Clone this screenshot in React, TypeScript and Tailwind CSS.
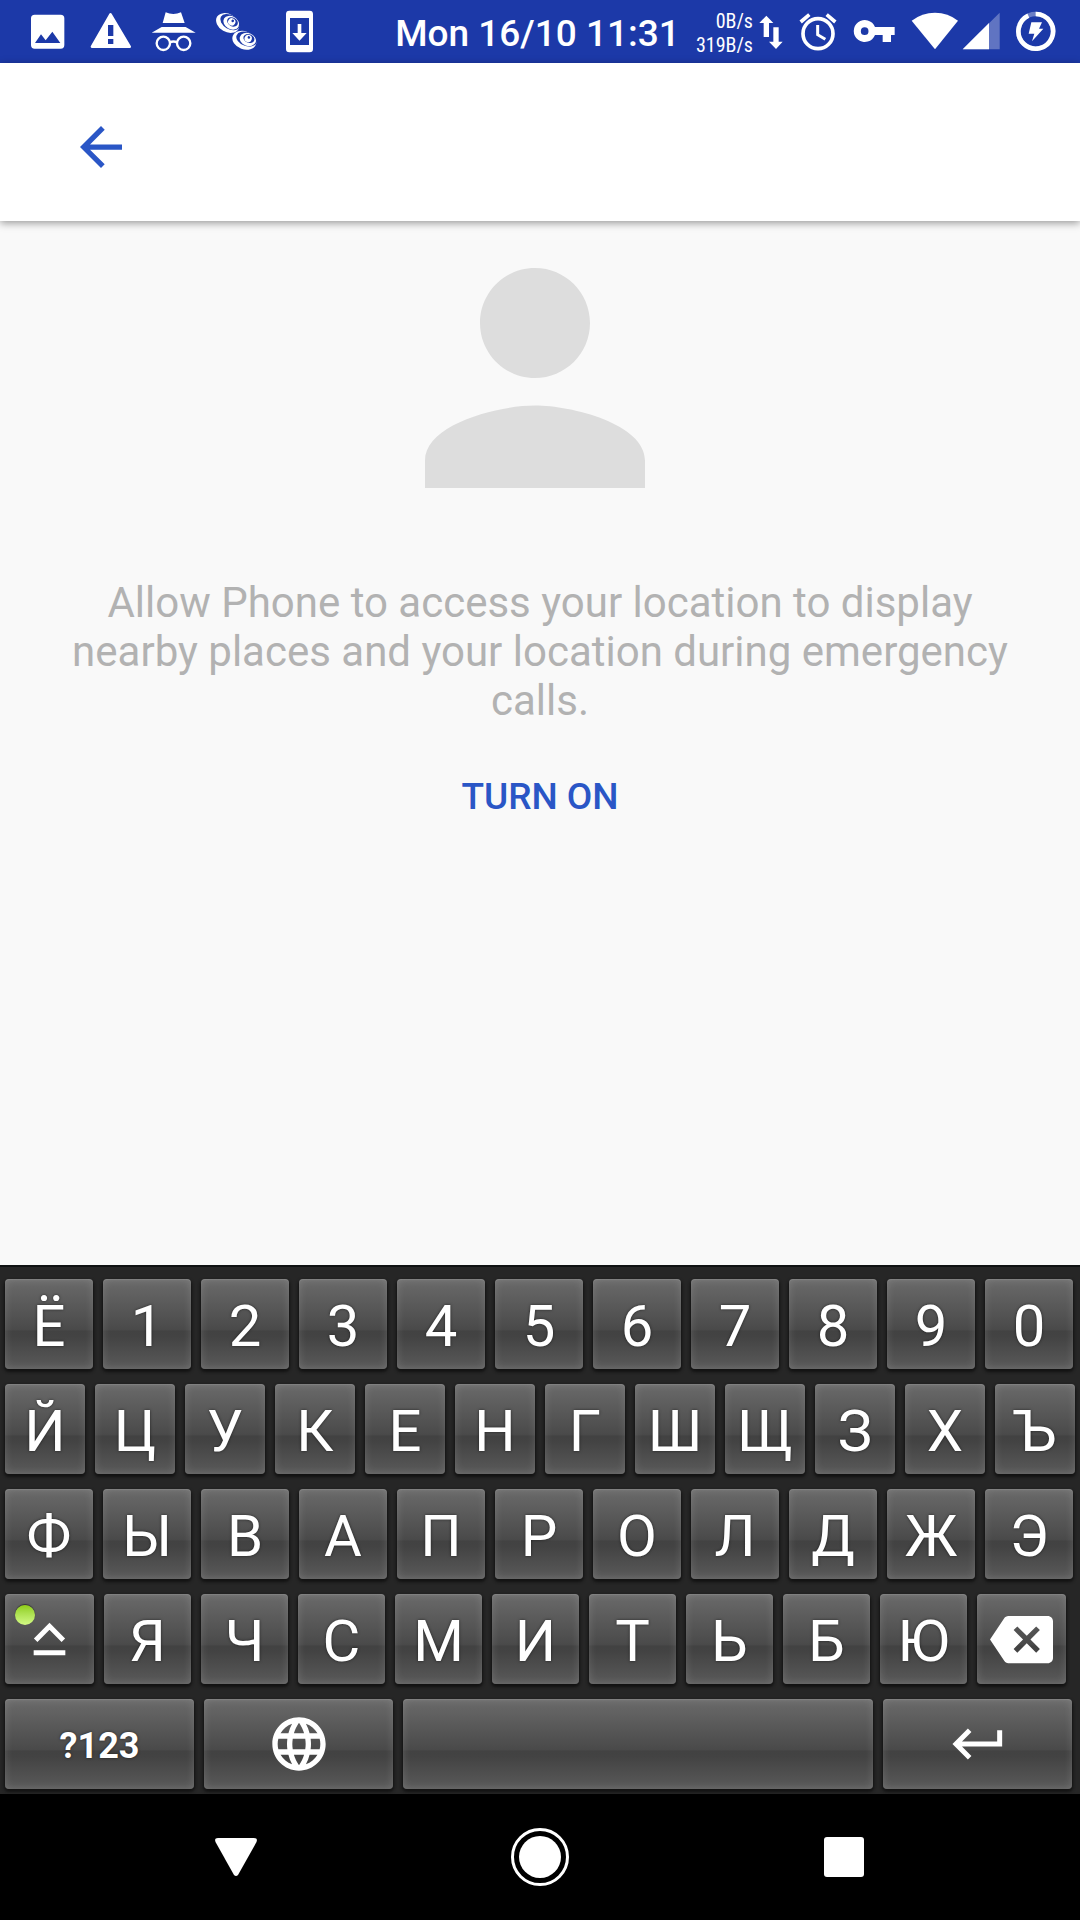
import type { ReactNode } from "react";

type KeyProps = { children?: ReactNode; label?: string; size?: string };

/* ---------- status bar icons ---------- */

function ImageIcon() {
  return (
    <svg className="h-[43px] w-[35px]" viewBox="90 30 105 129" fill="currentColor" aria-hidden="true">
      <path
        fillRule="evenodd"
        d="M104 44H182Q193 44 193 55V135Q193 146 182 146H104Q93 146 93 135V55Q93 44 104 44ZM105 129H181L157 95L137 121L123 103Z"
      />
    </svg>
  );
}

function WarningIcon() {
  return (
    <svg className="h-[43px] w-[42px]" viewBox="270 30 126 129" aria-hidden="true">
      <path d="M331.500 43L276 140H389Z" fill="currentColor" stroke="currentColor" strokeWidth="8" strokeLinejoin="round" />
      <path d="M324 75H340V108H324ZM324 117H340V132H324Z" fill="#1c39a8" />
    </svg>
  );
}

function IncognitoIcon() {
  return (
    <svg className="h-[43px] w-[47px]" viewBox="450 30 141 129" aria-hidden="true">
      <path
        fill="currentColor"
        d="M497 37Q508 42 520 42Q532 42 543 37L554 69H488ZM485 81H557L587 98H455Z"
      />
      <g fill="none" stroke="currentColor" strokeWidth="7">
        <circle cx="490" cy="130" r="20" />
        <circle cx="551" cy="130" r="20" />
        <path d="M509 127Q520 122 532 127" />
      </g>
    </svg>
  );
}

function Shell({ transform }: { transform: string }) {
  return (
    <g transform={transform}>
      <ellipse cx="0" cy="0" rx="37" ry="27" fill="currentColor" />
      <ellipse cx="5" cy="-6" rx="32" ry="21" fill="#1c39a8" />
      <ellipse cx="9" cy="-6" rx="25" ry="19" fill="currentColor" />
      <ellipse cx="11" cy="-10" rx="17" ry="13" fill="#1c39a8" />
      <circle cx="9" cy="-9" r="11" fill="currentColor" />
      <circle cx="10" cy="-13" r="4" fill="#1c39a8" />
    </g>
  );
}

function ShellsIcon() {
  return (
    <svg className="h-[43px] w-[43px]" viewBox="645 30 129 129" aria-hidden="true">
      <Shell transform="translate(683 69) rotate(30)" />
      <Shell transform="translate(733 121) rotate(20)" />
    </svg>
  );
}

function SystemUpdateIcon() {
  return (
    <svg className="h-[43px] w-[29px]" viewBox="855 30 87 129" fill="currentColor" aria-hidden="true">
      <path
        fillRule="evenodd"
        d="M868 32H929Q939 32 939 42V147Q939 157 929 157H868Q858 157 858 147V42Q858 32 868 32ZM870 54V135H927V54Z"
      />
      <path d="M893 72H904V99H920L898.500 122L877 99H893Z" />
    </svg>
  );
}

function TrafficIcon() {
  return (
    <svg className="h-[43px] w-6" viewBox="117 30 72 129" fill="currentColor" aria-hidden="true">
      <path d="M139 47L160 69H147V111H131V69H118ZM160 82H176V125H188L168 147L147 125H160Z" />
    </svg>
  );
}

function AlarmIcon() {
  return (
    <svg className="h-[43px] w-[38px]" viewBox="234 30 114 129" fill="none" stroke="currentColor" aria-hidden="true">
      <circle cx="291" cy="101" r="45" strokeWidth="11" />
      <path d="M239 66L265 44M343 66L317 44" strokeWidth="11" />
      <path d="M290 75V104L313 118" strokeWidth="9" />
    </svg>
  );
}

function VpnKeyIcon() {
  return (
    <svg className="h-[43px] w-[42px]" viewBox="399 30 126 129" fill="currentColor" aria-hidden="true">
      <path
        fillRule="evenodd"
        d="M465 81A33 33 0 1 0 465 105H488V126H513V105H524V81ZM434 82A11.500 11.500 0 1 1 434 105A11.500 11.500 0 1 1 434 82Z"
      />
    </svg>
  );
}

function WifiIcon() {
  return (
    <svg className="h-[43px] w-[47px]" viewBox="576 30 141 129" fill="currentColor" aria-hidden="true">
      <path d="M648 148L578 62Q609 38 648 38Q687 38 717 62Z" />
    </svg>
  );
}

function SignalIcon() {
  return (
    <svg className="h-[43px] w-[38px]" viewBox="729 30 114 129" fill="currentColor" aria-hidden="true">
      <path d="M731 148L842 38V148Z" opacity="0.3" />
      <path d="M731 148L810 69V148Z" />
    </svg>
  );
}

function BatteryIcon() {
  return (
    <svg className="h-[43px] w-10" viewBox="888 30 120 129" aria-hidden="true">
      <circle cx="947" cy="94" r="52" fill="none" stroke="currentColor" strokeWidth="14" opacity="0.35" />
      <path d="M947 42A52 52 0 1 1 925 47" fill="none" stroke="currentColor" strokeWidth="14" />
      <path d="M934 67H966L957 86H970L936 124L943 101H926Z" fill="currentColor" />
    </svg>
  );
}

/* ---------- keyboard icons ---------- */

function ShiftIcon() {
  return (
    <svg className="h-[34px] w-[33px]" viewBox="99 138 99 102" fill="none" stroke="currentColor" strokeWidth="15" aria-hidden="true">
      <path d="M107 193L148.500 151L190 193M101 230H196" />
    </svg>
  );
}

function BackspaceIcon() {
  return (
    <svg className="h-[63px] w-[63px]" viewBox="0 0 24 24" fill="currentColor" aria-hidden="true">
      <path d="M22 3H7c-.69 0-1.230.35-1.590.88L0 12l5.410 8.110c.36.53.9.890 1.590.890h15c1.100 0 2-.9 2-2V5c0-1.100-.9-2-2-2zm-3 12.590L17.590 17 14 13.410 10.410 17 9 15.590 12.590 12 9 8.410 10.410 7 14 10.590 17.590 7 19 8.410 15.410 12 19 15.590z" />
    </svg>
  );
}

function GlobeIcon() {
  return (
    <svg className="h-16 w-16" viewBox="0 0 24 24" fill="currentColor" aria-hidden="true">
      <path d="M11.990 2C6.470 2 2 6.480 2 12s4.470 10 9.990 10C17.520 22 22 17.520 22 12S17.520 2 11.990 2zm6.930 6h-2.950c-.32-1.250-.78-2.450-1.380-3.560 1.840.63 3.370 1.910 4.330 3.560zM12 4.040c.83 1.200 1.480 2.530 1.910 3.960h-3.820c.43-1.430 1.080-2.760 1.910-3.960zM4.260 14C4.100 13.360 4 12.690 4 12s.1-1.360.26-2h3.380c-.08.66-.14 1.320-.14 2 0 .68.06 1.340.14 2H4.260zm.82 2h2.950c.32 1.250.78 2.450 1.380 3.560-1.840-.63-3.370-1.900-4.330-3.560zm2.950-8H5.080c.96-1.660 2.490-2.930 4.330-3.560C8.810 5.550 8.350 6.750 8.030 8zM12 19.960c-.83-1.200-1.480-2.530-1.910-3.960h3.820c-.43 1.430-1.080 2.760-1.910 3.960zM14.340 14H9.660c-.09-.66-.16-1.320-.16-2 0-.68.07-1.350.16-2h4.680c.09.65.16 1.320.16 2 0 .68-.07 1.340-.16 2zm.25 5.560c.6-1.110 1.060-2.310 1.380-3.560h2.950c-.96 1.650-2.490 2.930-4.330 3.560zM16.360 14c.08-.66.14-1.320.14-2 0-.68-.06-1.340-.14-2h3.380c.16.64.26 1.310.26 2s-.1 1.360-.26 2h-3.380z" />
    </svg>
  );
}

function EnterIcon() {
  return (
    <svg className="h-8 w-[51px]" viewBox="513 458 153 96" fill="none" stroke="currentColor" strokeWidth="15" aria-hidden="true">
      <path d="M566 465L525 506L566 547M527 506H656V465" />
    </svg>
  );
}

/* ---------- keyboard ---------- */

function Key({ children, label, size = "min-w-0 flex-1" }: KeyProps) {
  return (
    <button
      type="button"
      aria-label={label}
      className={
        "relative flex h-[90px] items-center justify-center rounded-[4px] bg-[linear-gradient(180deg,#6a6a6a_0%,#4a4a4a_56%,#424242_58%,#434343_64%,#5a5a5a_100%)] text-white shadow-[0_2px_3px_1px_#121212,inset_0_0_8px_rgba(255,255,255,0.16),inset_0_1px_1px_rgba(255,255,255,0.1)] " +
        size
      }
    >
      {children}
    </button>
  );
}

function Letters({ text }: { text: string }) {
  return (
    <>
      {Array.from(text).map((letter) => (
        <Key key={letter}>
          <span className="pt-1 text-[58px] leading-[68px] [text-shadow:0_0_3px_rgba(0,0,0,0.6)]">{letter}</span>
        </Key>
      ))}
    </>
  );
}

function Keyboard() {
  return (
    <section
      aria-label="Keyboard"
      className="flex flex-col gap-[15px] border-t-2 border-[#101213] bg-[#262626] pt-3 pb-[5px] pl-[5px]"
    >
      <div className="flex gap-[10px] pr-[7px]">
        <Letters text="Ё1234567890" />
      </div>
      <div className="flex gap-[10px] pr-[5px]">
        <Letters text="ЙЦУКЕНГШЩЗХЪ" />
      </div>
      <div className="flex gap-[10px] pr-[7px]">
        <Letters text="ФЫВАПРОЛДЖЭ" />
      </div>
      <div className="flex gap-[10px] pr-[14px]">
        <Key label="Shift" size="w-[89px] shrink-0">
          <ShiftIcon />
          <span className="absolute top-[11px] left-[10px] size-5 rounded-full bg-linear-to-b from-[#8fce0c] to-[#d3fa83] shadow-[0_-1px_1px_#333]" />
        </Key>
        <Letters text="ЯЧСМИТЬБЮ" />
        <Key label="Backspace" size="w-[89px] shrink-0">
          <BackspaceIcon />
        </Key>
      </div>
      <div className="flex gap-[10px] pr-2">
        <Key size="w-[189px] shrink-0">
          <span className="pt-1 text-[36px] leading-[42px] font-bold [text-shadow:0_0_3px_rgba(0,0,0,0.6)]">?123</span>
        </Key>
        <Key label="Switch language" size="w-[189px] shrink-0">
          <GlobeIcon />
        </Key>
        <Key label="Space" />
        <Key label="Enter" size="w-[189px] shrink-0">
          <EnterIcon />
        </Key>
      </div>
    </section>
  );
}

/* ---------- screen ---------- */

function StatusBar() {
  const notifications = [ImageIcon, WarningIcon, IncognitoIcon, ShellsIcon, SystemUpdateIcon];
  return (
    <div className="flex h-[63px] items-center bg-[#1c39a8] pr-6 pl-4 text-white">
      <div className="flex">
        {notifications.map((Icon) => (
          <span key={Icon.name} className="flex w-[63px] justify-center">
            <Icon />
          </span>
        ))}
      </div>
      <div className="ml-auto flex items-center gap-4">
        <time className="pt-1 text-[37px] leading-[44px] font-medium whitespace-nowrap">Mon 16/10 11:31</time>
        <div className="flex items-center gap-1.5">
          <div className="pt-0.5 text-right font-['Roboto_Condensed','Roboto',sans-serif] text-[20px] leading-6">
            <p>0B/s</p>
            <p>319B/s</p>
          </div>
          <TrafficIcon />
        </div>
        <AlarmIcon />
        <VpnKeyIcon />
        <div className="flex gap-1">
          <WifiIcon />
          <SignalIcon />
        </div>
        <BatteryIcon />
      </div>
    </div>
  );
}

export default function App() {
  return (
    <div className="flex min-h-screen flex-col bg-[#f9f9f9] font-['Roboto',sans-serif]">
      <StatusBar />
      <header className="flex h-[158px] items-center bg-white px-20 pt-[10px] shadow-[0_2px_8px_rgba(0,0,0,0.4)]">
        <button type="button" aria-label="Back" className="text-[#2a56c6]">
          <svg className="size-[42px]" viewBox="4 4 16 16" fill="currentColor" aria-hidden="true">
            <path d="M20 11H7.830l5.590-5.590L12 4l-8 8 8 8 1.410-1.410L7.830 13H20v-2z" />
          </svg>
        </button>
      </header>
      <main className="flex flex-1 flex-col items-center px-16 pt-[47px]">
        <svg className="mr-[10px] size-[220px] text-[#dddddd]" viewBox="4 4 16 16" fill="currentColor" aria-hidden="true">
          <path d="M12 12c2.210 0 4-1.790 4-4s-1.790-4-4-4-4 1.790-4 4 1.790 4 4 4zm0 2c-2.670 0-8 1.340-8 4v2h16v-2c0-2.660-5.330-4-8-4z" />
        </svg>
        <p className="mt-[90px] text-center text-[42px] leading-[49px] text-[#b2b2b2]">
          Allow Phone to access your location to display nearby places and your location during emergency calls.
        </p>
        <button type="button" className="mt-[50px] text-[37px] leading-[44px] font-medium text-[#2a56c6]">
          TURN ON
        </button>
      </main>
      <Keyboard />
      <nav aria-label="System navigation" className="grid h-[126px] grid-cols-3 place-items-center bg-black px-[84px] text-white">
        <button type="button" aria-label="Back">
          <svg className="h-10 w-[42px]" viewBox="0 0 42 40" fill="currentColor" aria-hidden="true">
            <path d="M3 1H39Q43 1 41.500 5L23 38Q21 40 19 38L0.500 5Q-1 1 3 1Z" />
          </svg>
        </button>
        <button type="button" aria-label="Home">
          <svg className="size-[58px]" viewBox="0 0 58 58" aria-hidden="true">
            <circle cx="29" cy="29" r="27.500" fill="none" stroke="currentColor" strokeWidth="3" />
            <circle cx="29" cy="29" r="21" fill="currentColor" />
          </svg>
        </button>
        <button type="button" aria-label="Recent apps" className="size-10 rounded-[3px] bg-white" />
      </nav>
    </div>
  );
}
